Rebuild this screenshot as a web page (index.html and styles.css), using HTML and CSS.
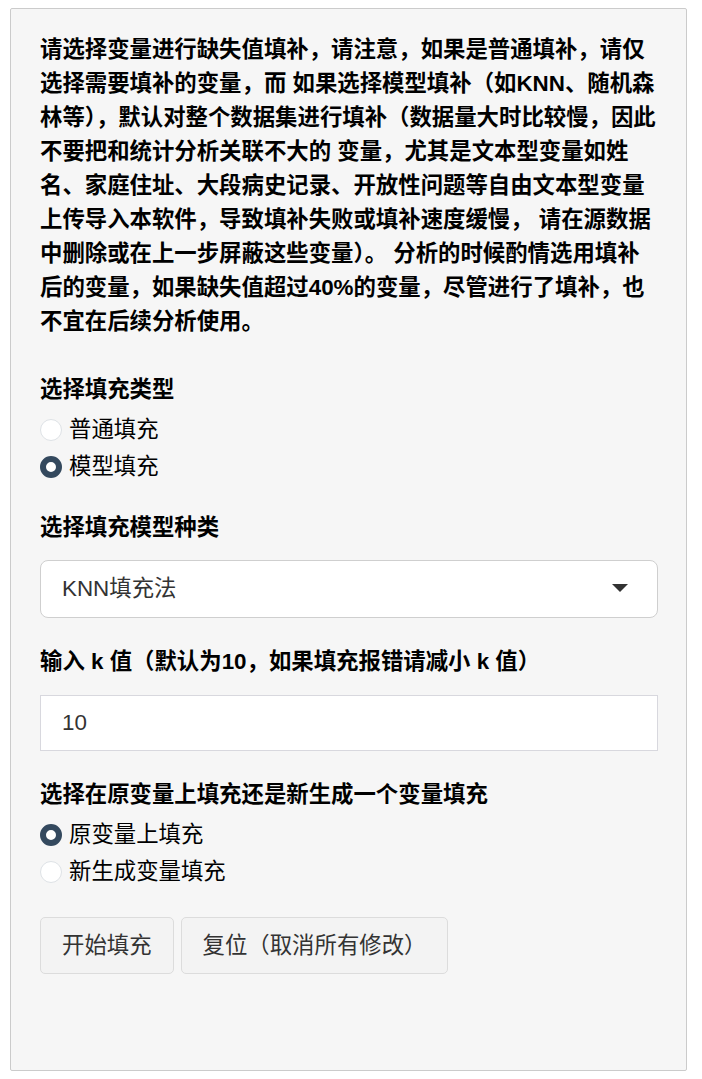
FILE: index.html
```html
<html>
<head>
    <link rel="stylesheet" href="styles.css">
</head>
<body>
    <div class="well">
        <p class="intro">请选择变量进行缺失值填补，请注意，如果是普通填补，请仅选择需要填补的变量，而 如果选择模型填补（如KNN、随机森林等），默认对整个数据集进行填补（数据量大时比较慢，因此不要把和统计分析关联不大的 变量，尤其是文本型变量如姓名、家庭住址、大段病史记录、开放性问题等自由文本型变量上传导入本软件，导致填补失败或填补速度缓慢， 请在源数据中删除或在上一步屏蔽这些变量）。 分析的时候酌情选用填补后的变量，如果缺失值超过40%的变量，尽管进行了填补，也不宜在后续分析使用。</p>

        <div class="group">
            <label class="control-label">选择填充类型</label>
            <div class="check">
                <input type="radio" id="fill_plain" name="fill_type" value="plain">
                <label for="fill_plain">普通填充</label>
            </div>
            <div class="check">
                <input type="radio" id="fill_model" name="fill_type" value="model" checked>
                <label for="fill_model">模型填充</label>
            </div>
        </div>

        <div class="group">
            <label class="control-label" for="model_kind">选择填充模型种类</label>
            <div class="select-wrap">
                <select id="model_kind">
                    <option>KNN填充法</option>
                    <option>随机森林填充法</option>
                </select>
                <svg class="caret" width="16" height="8" viewBox="0 0 16 8">
                    <path d="M0 0 L16 0 L8 8 Z" fill="#333"/>
                </svg>
            </div>
        </div>

        <div class="group">
            <label class="control-label" for="k_value">输入 k 值（默认为10，如果填充报错请减小 k 值）</label>
            <input type="text" id="k_value" class="text-input" value="10">
        </div>

        <div class="group">
            <label class="control-label">选择在原变量上填充还是新生成一个变量填充</label>
            <div class="check">
                <input type="radio" id="place_orig" name="fill_place" value="orig" checked>
                <label for="place_orig">原变量上填充</label>
            </div>
            <div class="check">
                <input type="radio" id="place_new" name="fill_place" value="new">
                <label for="place_new">新生成变量填充</label>
            </div>
        </div>

        <div class="actions">
            <button type="button">开始填充</button>
            <button type="button">复位（取消所有修改）</button>
        </div>
    </div>
</body>
</html>
```

FILE: styles.css
```css
body {
    margin: 8px 15px 8px 10px;
    font-family: "Liberation Sans", "Noto Sans CJK SC", sans-serif;
    font-size: 22.4px;
    line-height: 34px;
    color: #000;
    background: #fff;
}

.well {
    box-sizing: border-box;
    width: 677px;
    height: 1063px;
    padding: 24px 28px 28px 29px;
    background: #f6f6f6;
    border: 1px solid #cbcbcb;
    border-radius: 2px;
}

.intro {
    margin: 0 0 34px;
    font-weight: bold;
}

.group {
    margin-bottom: 27px;
}

.control-label {
    display: block;
    font-weight: bold;
    margin-bottom: 6px;
}

.check {
    display: flex;
    align-items: center;
    height: 34px;
    margin-bottom: 3px;
}

.check input {
    appearance: none;
    -webkit-appearance: none;
    box-sizing: border-box;
    width: 22px;
    height: 22px;
    margin: 0 7px 0 0;
    border-radius: 50%;
    border: 1px solid #dee2e6;
    background: #fff;
}

.check input:checked {
    border: 6.5px solid #34495e;
    background: #fff;
}

.check label {
    font-weight: normal;
}

.select-wrap {
    position: relative;
    margin-top: 15px;
}

.select-wrap select {
    appearance: none;
    -webkit-appearance: none;
    box-sizing: border-box;
    width: 100%;
    height: 58px;
    padding: 0 21px;
    font: inherit;
    color: #333;
    background: #fff;
    border: 1px solid #cfcfcf;
    border-radius: 8px;
}

.caret {
    position: absolute;
    right: 30px;
    top: 24px;
}

.text-input {
    box-sizing: border-box;
    width: 100%;
    height: 56px;
    margin-top: 10px;
    padding: 0 21px;
    font: inherit;
    color: #333;
    background: #fff;
    border: 1px solid #d8d8de;
    border-radius: 0;
}

.actions {
    display: flex;
    gap: 7px;
    margin-top: 28px;
}

button {
    box-sizing: border-box;
    height: 57px;
    padding: 0 21px;
    font: inherit;
    color: #333;
    background: #f3f3f3;
    border: 1px solid #dcdcdc;
    border-radius: 5px;
}
```
